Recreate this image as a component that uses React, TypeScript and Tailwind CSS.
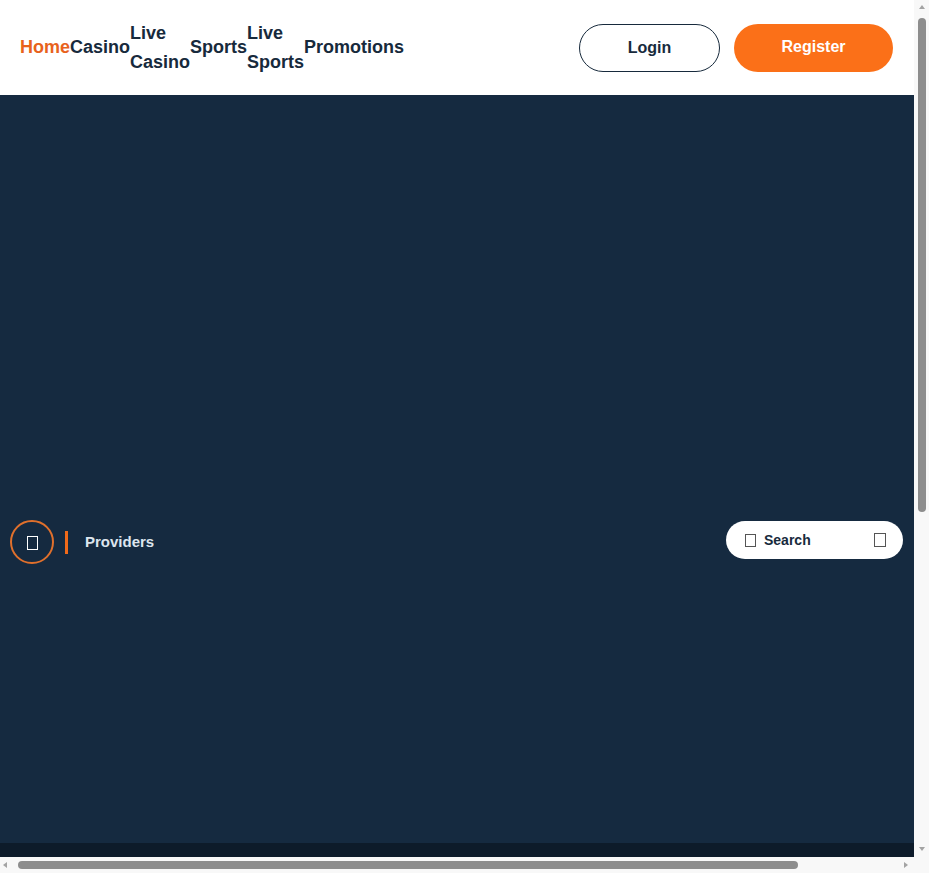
import React from "react";

function Tofu({ className }: { className: string }) {
  return <span className={"inline-block border " + className} />;
}

export default function App() {
  const font = { fontFamily: '"Liberation Sans", Arial, sans-serif' };
  return (
    <div style={font} className="grid h-[873px] w-[929px] grid-cols-[914px_15px] grid-rows-[857px_16px] overflow-hidden bg-white">
      <div className="overflow-hidden">
        <header className="flex h-[95px] items-center justify-between bg-white pl-5 pr-[21px]">
          <nav className="flex items-center text-[18px] font-bold leading-[29px] text-[#172a3c]">
            <a className="text-[#e8621c]">Home</a>
            <a>Casino</a>
            <a className="w-min">Live Casino</a>
            <a>Sports</a>
            <a className="w-min">Live Sports</a>
            <a>Promotions</a>
          </nav>
          <div className="flex items-center gap-[14px]">
            <button className="flex h-[48px] w-[141px] items-center justify-center rounded-full border border-[#172a3c] bg-white text-[16px] font-bold text-[#172a3c]">
              Login
            </button>
            <button className="flex h-[48px] w-[159px] items-center justify-center rounded-full bg-[#fb7018] pb-[2px] text-[16px] font-bold text-white">
              Register
            </button>
          </div>
        </header>
        <main className="bg-[#152a40]">
          <div className="h-[425px]" />
          <div className="flex h-[44px] items-center justify-between pl-[10px] pr-[11px]">
            <div className="flex items-center">
              <div className="flex h-[44px] w-[44px] items-center justify-center rounded-full border-2 border-[#e0702c]">
                <Tofu className="mt-[1px] h-[14px] w-[11px] border-white" />
              </div>
              <div className="ml-[11px] h-[23px] w-[3px] bg-[#f06a1a]" />
              <span className="ml-[17px] text-[15px] font-bold text-[#dde5ee]">Providers</span>
            </div>
            <div className="-mt-[4px] flex h-[38px] w-[177px] items-center rounded-full bg-white pl-[19px] pr-[17px]">
              <Tofu className="h-[13px] w-[11px] border-[#555]" />
              <span className="ml-[8px] text-[14px] font-bold text-[#172a3c]">Search</span>
              <Tofu className="ml-auto h-[14px] w-[12px] border-[#555]" />
            </div>
          </div>
          <div className="h-[279px]" />
        </main>
        <footer className="h-[600px] bg-[#0d1b2a]" />
      </div>

      {/* vertical scrollbar */}
      <div className="flex flex-col items-center bg-[#f8f8f8] pt-[5px]">
        <span className="h-0 w-0 border-x-[3px] border-b-[4px] border-x-transparent border-b-[#a3a3a3]" />
        <span className="mt-[9px] h-[494px] w-[8px] rounded-full bg-[#8d8d8d]" />
        <span className="mb-[6px] mt-auto h-0 w-0 border-x-[3px] border-t-[4px] border-x-transparent border-t-[#a3a3a3]" />
      </div>

      {/* horizontal scrollbar */}
      <div className="flex items-center bg-[#f8f8f8] pl-[3px]">
        <span className="h-0 w-0 border-y-[3px] border-r-[4px] border-y-transparent border-r-[#a3a3a3]" />
        <span className="ml-[11px] h-[8px] w-[780px] rounded-full bg-[#8d8d8d]" />
        <span className="ml-auto mr-[6px] h-0 w-0 border-y-[3px] border-l-[4px] border-y-transparent border-l-[#a3a3a3]" />
      </div>

      <div className="bg-[#f8f8f8]" />
    </div>
  );
}
